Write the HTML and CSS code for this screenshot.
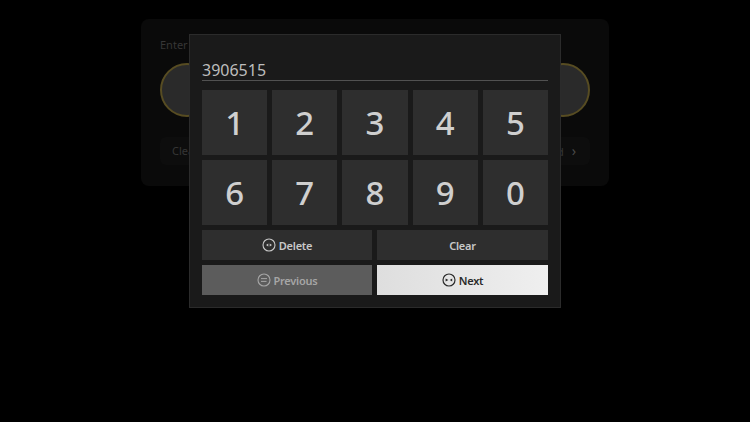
FILE: index.html
```html
<!DOCTYPE html>
<html lang="en">
<head>
    <meta charset="UTF-8">
    <meta name="viewport" content="width=device-width, initial-scale=1.0">
    <title>Enter code</title>
    <link rel="stylesheet" href="styles.css">
</head>
<body>
    <div class="screen">
        <div class="panel">
            <div class="panel-label">Enter</div>
            <div class="circles">
                <div class="circle"></div>
                <div class="circle"></div>
            </div>
            <div class="panel-actions">
                <span class="ghost">Clear</span>
                <span class="ghost">Advanced <span class="chevron">&rsaquo;</span></span>
            </div>
        </div>

        <div class="dialog">
            <div class="code-input">3906515</div>

            <div class="keypad">
                <div class="key">1</div>
                <div class="key">2</div>
                <div class="key">3</div>
                <div class="key">4</div>
                <div class="key">5</div>
                <div class="key">6</div>
                <div class="key">7</div>
                <div class="key">8</div>
                <div class="key">9</div>
                <div class="key">0</div>
            </div>

            <div class="actions">
                <div class="btn">
                    <svg class="remote-icon" viewBox="0 0 14 14">
                        <circle cx="7" cy="7" r="6" fill="none" stroke="currentColor" stroke-width="1.1"/>
                        <path d="M6.3 5.6v2.8L4 7zM7.7 5.6v2.8L10 7z" fill="currentColor"/>
                    </svg>
                    Delete
                </div>
                <div class="btn">Clear</div>
                <div class="btn btn-disabled">
                    <svg class="remote-icon" viewBox="0 0 14 14">
                        <circle cx="7" cy="7" r="6" fill="none" stroke="currentColor" stroke-width="1.1"/>
                        <path d="M4 5.6h6M4 8.4h5.5" fill="none" stroke="currentColor" stroke-width="1"/>
                    </svg>
                    Previous
                </div>
                <div class="btn btn-active">
                    <svg class="remote-icon" viewBox="0 0 14 14">
                        <circle cx="7" cy="7" r="6" fill="none" stroke="currentColor" stroke-width="1.2"/>
                        <path d="M3.6 5.4v3.2L6.4 7zM10.2 5.6v2.8L7.8 7z" fill="currentColor"/>
                    </svg>
                    Next
                </div>
            </div>
        </div>
    </div>
</body>
</html>
```

FILE: styles.css
```css
* {
    box-sizing: border-box;
}

html, body {
    margin: 0;
    background: #000;
}

body {
    font-family: "Noto Sans", "Open Sans", sans-serif;
    color: #d6d6d6;
}

.screen {
    position: relative;
    width: 750px;
    height: 422px;
    overflow: hidden;
    background: #000;
    padding: 19px 141px 0;
}

.panel {
    height: 167px;
    background: #0a0a0a;
    border-radius: 8px;
    padding: 18px 19px 0;
}

.panel-label {
    font-size: 11px;
    line-height: 15px;
    color: #363636;
}

.circles {
    display: flex;
    justify-content: space-between;
    margin-top: 11px;
}

.circle {
    width: 54px;
    height: 54px;
    border-radius: 50%;
    background: #2a2a2a;
    border: 2px solid #574c22;
}

.panel-actions {
    display: flex;
    justify-content: space-between;
    margin-top: 20px;
    font-size: 11px;
    line-height: 15px;
    color: #363636;
}

.ghost {
    padding: 6px 14px 6px 12px;
    background: #0d0d0d;
    border-radius: 6px;
}

.chevron {
    margin-left: 5px;
    font-size: 14px;
    line-height: 15px;
    color: #4a4a4a;
}

.dialog {
    position: absolute;
    left: 189px;
    top: 34px;
    width: 372px;
    height: 274px;
    background: #1a1a1a;
    border: 1px solid #2b2b2b;
    padding: 0 12px;
}

.code-input {
    height: 46px;
    padding-top: 25px;
    font-size: 16px;
    line-height: 20px;
    color: #bdbdbd;
    border-bottom: 1px solid #515151;
}

.keypad {
    display: grid;
    grid-template-columns: repeat(5, 1fr);
    grid-auto-rows: 65px;
    gap: 5px;
    margin-top: 9px;
}

.key {
    display: flex;
    align-items: center;
    justify-content: center;
    background: #2e2e2e;
    font-size: 33px;
    font-weight: 500;
    color: #cfcfcf;
}

.actions {
    display: grid;
    grid-template-columns: 170px 171px;
    grid-auto-rows: 30px;
    gap: 5px;
    margin-top: 5px;
}

.btn {
    display: flex;
    align-items: center;
    justify-content: center;
    gap: 3px;
    background: #2e2e2e;
    font-size: 11px;
    letter-spacing: -0.25px;
    font-weight: 600;
    color: #c8c8c8;
}

.btn-disabled {
    background: #5c5c5c;
    color: #a6a6a6;
}

.btn-active {
    background: linear-gradient(90deg, #dedede, #efefef);
    color: #2a2a2a;
}

.remote-icon {
    width: 14px;
    height: 14px;
}
```
